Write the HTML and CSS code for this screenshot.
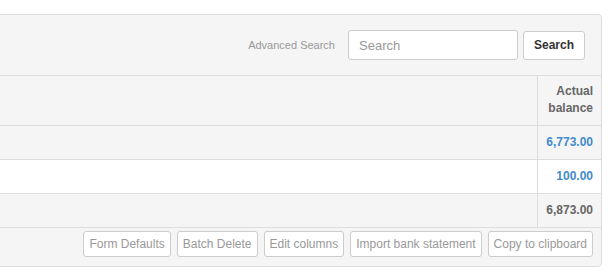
FILE: index.html
```html
<!DOCTYPE html>
<html lang="en">
<head>
    <meta charset="UTF-8">
    <title>Accounts</title>
    <link rel="stylesheet" href="styles.css">
</head>
<body>
    <div class="panel">
        <div class="toolbar">
            <a class="adv">Advanced Search</a>
            <input type="text" class="search_input" placeholder="Search">
            <button class="search_btn">Search</button>
        </div>
        <table class="grid">
            <thead>
                <tr>
                    <th class="name"></th>
                    <th class="num">Actual<br>balance</th>
                </tr>
            </thead>
            <tbody>
                <tr class="odd">
                    <td class="name"></td>
                    <td class="num link">6,773.00</td>
                </tr>
                <tr>
                    <td class="name"></td>
                    <td class="num link">100.00</td>
                </tr>
                <tr class="total">
                    <td class="name"></td>
                    <td class="num">6,873.00</td>
                </tr>
            </tbody>
        </table>
        <div class="footer">
            <button>Form Defaults</button>
            <button>Batch Delete</button>
            <button>Edit columns</button>
            <button>Import bank statement</button>
            <button>Copy to clipboard</button>
        </div>
    </div>
</body>
</html>
```

FILE: styles.css
```css
*{
    margin: 0;
    padding: 0;
    box-sizing: border-box;
}
body{
    background-color: #fff;
    font-family: "Liberation Sans", Arial, sans-serif;
    font-size: 12px;
    color: #333;
}
.panel{
    margin: 14px 10px 0 -10px;
    border: 1px solid #ddd;
    border-radius: 4px;
    background-color: #f5f5f5;
    overflow: hidden;
}
.toolbar{
    display: flex;
    justify-content: flex-end;
    align-items: center;
    gap: 5px;
    padding: 0 16px 0 0;
    height: 61px;
    border-bottom: 1px solid #ddd;
}
.adv{
    margin-right: 8px;
    font-size: 11px;
    color: #999;
}
.search_input{
    width: 170px;
    height: 30px;
    padding: 0 10px;
    border: 1px solid #ccc;
    border-radius: 3px;
    font-family: inherit;
    font-size: 13px;
    color: #333;
    background-color: #fff;
}
.search_input::placeholder{
    color: #999;
}
.search_btn{
    width: 62px;
    height: 29px;
    border: 1px solid #ccc;
    border-radius: 3px;
    font-family: inherit;
    font-weight: bold;
    font-size: 12px;
    color: #333;
    background-color: #fff;
}
.grid{
    width: 100%;
    border-collapse: collapse;
}
.grid th,.grid td{
    border-bottom: 1px solid #ddd;
    padding: 0 8px;
}
.grid th{
    height: 49px;
    font-size: 12px;
    line-height: 17px;
    color: #666;
}
.grid td{
    height: 34px;
    font-weight: bold;
    color: #666;
}
.grid tbody tr{
    background-color: #fff;
}
.grid tbody tr.odd,.grid tbody tr.total{
    background-color: #f5f5f5;
}
.grid .num{
    width: 64px;
    text-align: right;
    border-left: 1px solid #ddd;
}
.grid .link{
    color: #428bca;
}
.footer{
    display: flex;
    justify-content: flex-end;
    gap: 6px;
    padding: 3px 8px 9px;
}
.footer button{
    height: 26px;
    padding: 0 5px;
    border: 1px solid #ccc;
    border-radius: 3px;
    font-family: inherit;
    font-size: 12px;
    color: #999;
    background-color: #fff;
}
```
